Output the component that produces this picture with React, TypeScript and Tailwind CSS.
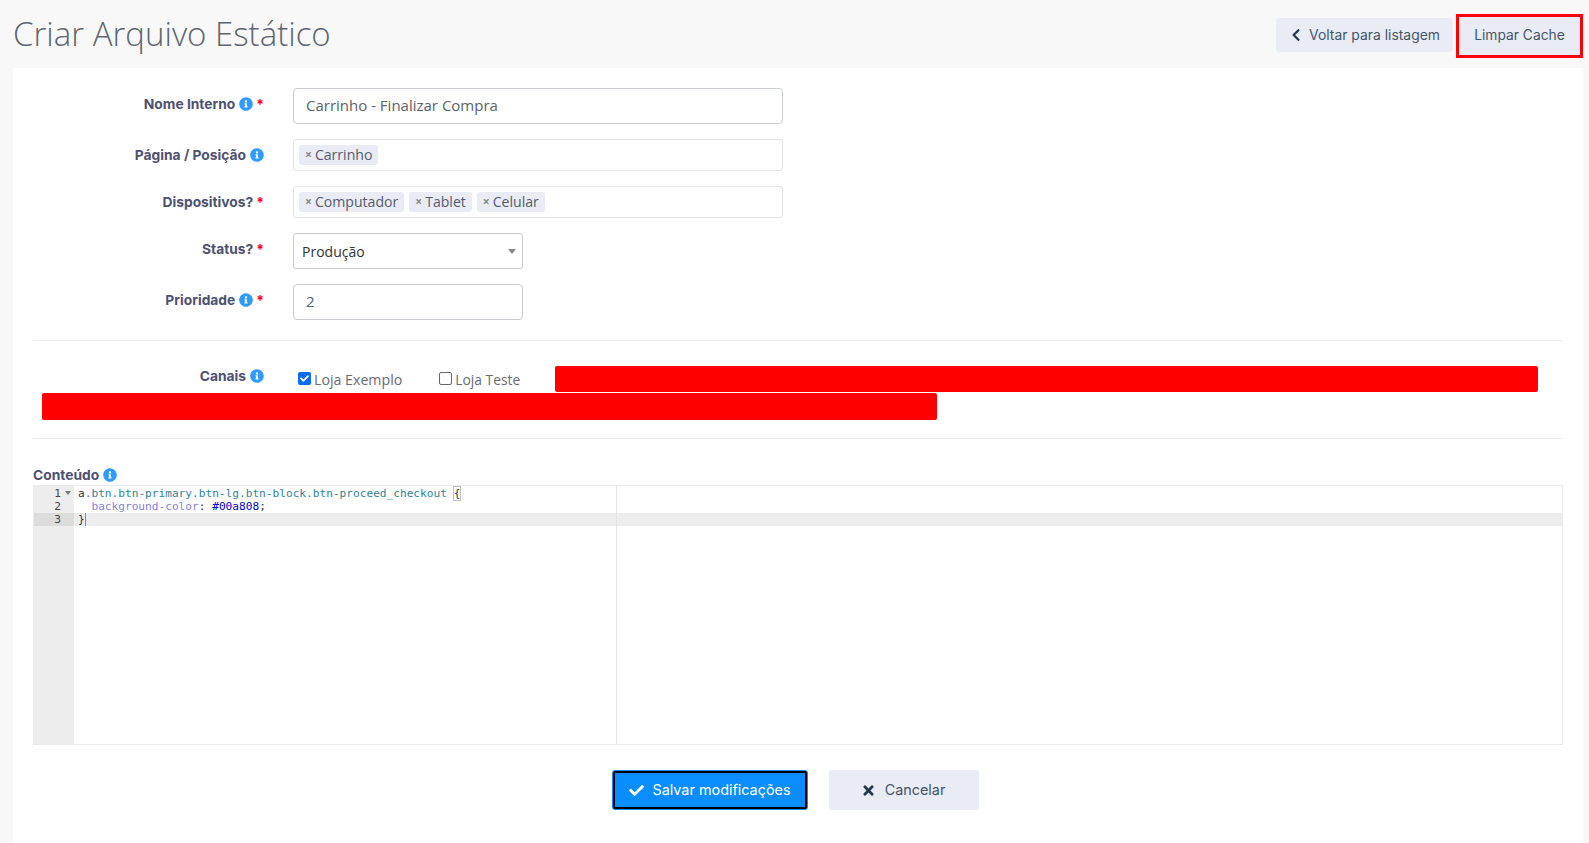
import { FaCheck, FaChevronLeft, FaInfoCircle, FaTimes } from "react-icons/fa";

function Info() {
  return <FaInfoCircle className="mb-[2px] ml-1 inline-block size-[14px] text-[#2f9bff]" />;
}

function Req() {
  return <span className="ml-[3px] font-bold text-[#f00]">*</span>;
}

function Label({ text, info, req, className = "" }: { text: string; info?: boolean; req?: boolean; className?: string }) {
  return (
    <div className={`w-[231px] shrink-0 text-right font-['Inter',sans-serif] text-[13.8px] font-bold text-[#4e5170] ${className}`}>
      {text}
      {info && <Info />}
      {req && <Req />}
    </div>
  );
}

function Tag({ text }: { text: string }) {
  return (
    <span className="flex h-5 items-center gap-[3px] rounded-[3px] bg-[#e9ecf4] px-[6px] pb-[1px] text-[14.1px] text-[#555b6e]">
      <span className="text-[12px] font-bold text-[#888]">×</span>
      {text}
    </span>
  );
}

export default function App() {
  return (
    <div className="min-h-[843px] bg-[#f8f8f9] pl-[13px] pr-[6px] font-['Open_Sans',sans-serif]">
      <div className="flex h-[68px] items-center justify-between">
        <h1 className="text-[33px] font-light text-[#5f6670]">Criar Arquivo Estático</h1>
        <div className="flex items-center pt-[2px]">
          <button className="flex h-[34px] w-[177px] items-center gap-[6px] rounded-[3px] bg-[#e9ecf4] pl-[13px] font-['Inter',sans-serif] text-[13.9px] text-[#46546a]">
            <FaChevronLeft className="size-[14px] text-[#23374d]" />
            Voltar para listagem
          </button>
          <button className="ml-[3px] mt-[2px] flex h-[44px] w-[127px] items-center justify-center border-[3px] border-[#f00] bg-[#e9ecf4] pb-[1px] font-['Inter',sans-serif] text-[13.8px] text-[#46546a]">
            Limpar Cache
          </button>
        </div>
      </div>

      <div className="min-h-[775px] bg-white px-5 pt-5">
        <div className="flex h-9 items-center">
          <Label text="Nome Interno" info req className="-mt-1" />
          <div className="ml-[29px] flex h-9 w-[490px] items-center rounded-[4px] border border-[#c9ccd4] px-3 pb-[1px] text-[15px] text-[#5b616b]">
            Carrinho - Finalizar Compra
          </div>
        </div>

        <div className="mt-[15px] flex h-8 items-center">
          <Label text="Página / Posição" info />
          <div className="ml-[29px] flex h-8 w-[490px] items-center gap-[6px] rounded-[3px] border border-[#e3e5ea] pl-[5px]">
            <Tag text="Carrinho" />
          </div>
        </div>

        <div className="mt-[15px] flex h-8 items-center">
          <Label text="Dispositivos?" req />
          <div className="ml-[29px] flex h-8 w-[490px] items-center gap-[5px] rounded-[3px] border border-[#e3e5ea] pl-[5px]">
            <Tag text="Computador" />
            <Tag text="Tablet" />
            <Tag text="Celular" />
          </div>
        </div>

        <div className="mt-[15px] flex h-9 items-center">
          <Label text="Status?" req className="-mt-1" />
          <div className="ml-[29px] flex h-9 w-[230px] items-center justify-between rounded-[3px] border border-[#c9ccd4] pl-2 pr-[6px] text-[14px] text-[#333]">
            Produção
            <span className="size-0 border-x-4 border-t-[5px] border-x-transparent border-t-[#888]" />
          </div>
        </div>

        <div className="mt-[15px] flex h-9 items-center">
          <Label text="Prioridade" info req className="-mt-1" />
          <div className="ml-[29px] flex h-9 w-[230px] items-center rounded-[4px] border border-[#c9ccd4] px-3 pb-[1px] text-[15px] text-[#5b616b]">
            2
          </div>
        </div>

        <hr className="mt-5 border-[#ebecef]" />

        <div className="mt-[25px] flex h-[27px] items-start">
          <Label text="Canais" info />
          <label className="ml-[34px] flex items-center gap-[3px] text-[14.2px] text-[#666c76]">
            <span className="flex size-[13px] items-center justify-center rounded-[2px] bg-[#0a6cf5]">
              <FaCheck className="size-[9px] text-white" />
            </span>
            <span className="mt-[3px]">Loja Exemplo</span>
          </label>
          <label className="ml-[37px] flex items-center gap-[3px] text-[13.8px] text-[#666c76]">
            <span className="size-[13px] rounded-[2px] border border-[#666] bg-white" />
            <span className="mt-[4px]">Loja Teste</span>
          </label>
          <div className="ml-[35px] h-[26px] w-[983px] rounded-[2px] bg-[#f00]" />
        </div>
        <div className="ml-[9px] h-[27px] w-[895px] rounded-[2px] bg-[#f00]" />

        <hr className="mt-[18px] border-[#ebecef]" />

        <div className="mt-[27px] flex h-[19px] items-center font-['Inter',sans-serif] text-[13.8px] font-bold text-[#4e5170]">
          Conteúdo
          <Info />
        </div>

        <div className="flex h-[260px] border border-[#ebecef] font-['DejaVu_Sans_Mono',monospace] text-[11.15px] leading-[13px]">
          <div className="w-[40px] shrink-0 bg-[#ededed] pt-[1px] text-[#444]">
            <div className="relative h-[13px] pr-[13px] text-right">
              1
              <span className="absolute right-[3px] top-[4px] size-0 border-x-[3px] border-t-[4px] border-x-transparent border-t-[#777]" />
            </div>
            <div className="h-[13px] pr-[13px] text-right">2</div>
            <div className="h-[13px] bg-[#dcdcdc] pr-[13px] text-right">3</div>
          </div>
          <div className="relative flex-1 pt-[1px] text-[#333]">
            <div className="h-[13px] whitespace-pre pl-[4px]">
              a<span className="text-[#318495]">.btn.btn-primary.btn-lg.btn-block.btn-proceed_checkout</span>{" "}
              <span className="outline outline-1 outline-[#bfbfbf]">{"{"}</span>
            </div>
            <div className="h-[13px] whitespace-pre pl-[4px]">
              {"  "}
              <span className="text-[#8a7fd6]">background-color</span>: <span className="text-[#0000cd]">#00a808</span>;
            </div>
            <div className="h-[13px] bg-[#ededed] pl-[4px]">
              <span className="border-r border-[#888]">{"}"}</span>
            </div>
            <div className="absolute inset-y-0 left-[542px] w-px bg-[#e4e4e4]" />
          </div>
        </div>

        <div className="mt-[25px] flex justify-center gap-[21px] pb-[33px] pr-[5px]">
          <button className="flex h-10 w-[196px] items-center justify-center gap-[8px] rounded-[3px] border border-[#0a8dff] bg-[#0a8dff] font-['Inter',sans-serif] text-[14.4px] text-white outline outline-2 -outline-offset-[3px] outline-black">
            <FaCheck className="size-[15px]" />
            Salvar modificações
          </button>
          <button className="flex h-10 w-[150px] items-center justify-center gap-[9px] rounded-[3px] bg-[#e9ecf4] pr-[2px] font-['Inter',sans-serif] text-[14.4px] text-[#46546a]">
            <FaTimes className="size-[15px] text-[#23374d]" />
            Cancelar
          </button>
        </div>
      </div>
    </div>
  );
}
